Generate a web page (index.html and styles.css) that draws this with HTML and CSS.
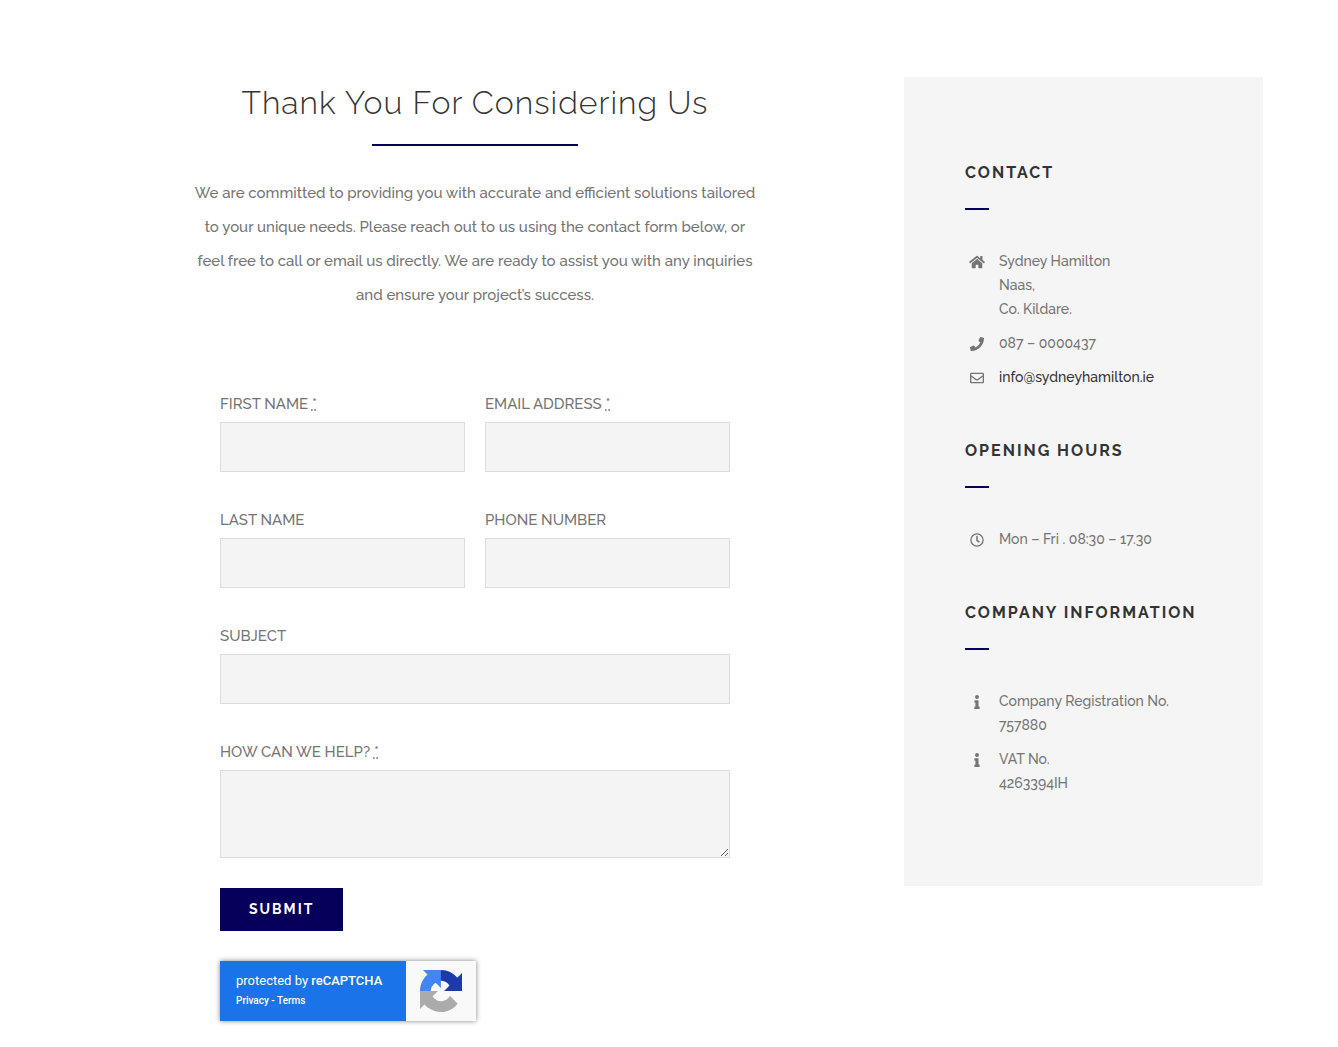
FILE: index.html
```
<!DOCTYPE html>
<html lang="en">
<head>
  <meta charset="utf-8">
  <meta name="viewport" content="width=device-width, initial-scale=1">
  <title>Contact</title>
  <link rel="stylesheet" href="styles.css">
</head>
<body>
  <div class="page">
    <main class="content">
      <h1 class="title">Thank You For Considering Us</h1>
      <p class="intro">We are committed to providing you with accurate and efficient solutions tailored to your unique needs. Please reach out to us using the contact form below, or feel free to call or email us directly. We are ready to assist you with any inquiries and ensure your project’s success.</p>

      <form class="contact-form">
        <div class="field">
          <label for="first-name">First Name <abbr title="required">*</abbr></label>
          <input type="text" id="first-name" required>
        </div>
        <div class="field">
          <label for="email">Email Address <abbr title="required">*</abbr></label>
          <input type="email" id="email" required>
        </div>
        <div class="field">
          <label for="last-name">Last Name</label>
          <input type="text" id="last-name">
        </div>
        <div class="field">
          <label for="phone">Phone Number</label>
          <input type="tel" id="phone">
        </div>
        <div class="field wide">
          <label for="subject">Subject</label>
          <input type="text" id="subject">
        </div>
        <div class="field wide">
          <label for="message">How can we help? <abbr title="required">*</abbr></label>
          <textarea id="message" required></textarea>
        </div>
        <div class="actions wide">
          <button type="submit" class="submit">Submit</button>
          <div class="captcha">
            <div class="captcha-text">
              <span class="captcha-title">protected by <strong>reCAPTCHA</strong></span>
              <span class="captcha-links"><a href="#">Privacy</a> - <a href="#">Terms</a></span>
            </div>
            <div class="captcha-logo">
              <svg width="42" height="42" viewBox="0 0 64 64">
                <path fill="#1c3aa9" d="M64 31.955l-.033-1.37V4.687l-7.16 7.16C50.948 4.674 42.033.093 32.05.093c-10.4 0-19.622 4.96-25.458 12.64l11.736 11.86a15.55 15.55 0 0 1 4.754-5.334c2.05-1.6 4.952-2.906 8.968-2.906.485 0 .86.057 1.135.163 4.976.393 9.288 3.14 11.828 7.124l-8.307 8.307L64 31.953"/>
                <path fill="#4285f4" d="M31.862.094l-1.37.033H4.594l7.16 7.16C4.58 13.147 0 22.06 0 32.046c0 10.4 4.96 19.622 12.64 25.458L24.5 45.768a15.55 15.55 0 0 1-5.334-4.754c-1.6-2.05-2.906-4.952-2.906-8.968 0-.485.057-.86.163-1.135.393-4.976 3.14-9.288 7.124-11.828l8.307 8.307L31.86.095"/>
                <path fill="#ababab" d="M.001 32.045l.033 1.37v25.898l7.16-7.16c5.86 7.173 14.774 11.754 24.76 11.754 10.4 0 19.622-4.96 25.458-12.64l-11.736-11.86a15.55 15.55 0 0 1-4.754 5.334c-2.05 1.6-4.952 2.906-8.968 2.906-.485 0-.86-.057-1.135-.163-4.976-.393-9.288-3.14-11.828-7.124l8.307-8.307c-10.522.04-22.4.066-27.295-.005"/>
              </svg>
            </div>
          </div>
        </div>
      </form>
    </main>

    <aside class="sidebar">
      <section class="block">
        <h2>Contact</h2>
        <ul>
          <li>
            <svg class="icon" viewBox="0 0 576 512"><path d="M280 148L96 300v164a16 16 0 0 0 16 16h112a16 16 0 0 0 16-16v-96a16 16 0 0 1 16-16h64a16 16 0 0 1 16 16v96a16 16 0 0 0 16 16h112a16 16 0 0 0 16-16V300L296 148a12 12 0 0 0-16 0zM572 251l-84-69V44a12 12 0 0 0-12-12h-56a12 12 0 0 0-12 12v72l-90-74a48 48 0 0 0-61 0L4 251a12 12 0 0 0-1 17l25 31a12 12 0 0 0 17 2L280 107a12 12 0 0 1 16 0l235 194a12 12 0 0 0 17-2l26-31a12 12 0 0 0-2-17z"/></svg>
            <span>Sydney Hamilton<br>Naas,<br>Co. Kildare.</span>
          </li>
          <li>
            <svg class="icon" viewBox="0 0 512 512"><path d="M493 25L389 1a24 24 0 0 0-27 14l-48 112a24 24 0 0 0 7 28l60 49A371 371 0 0 1 204 381l-49-60a24 24 0 0 0-28-7L15 362a24 24 0 0 0-14 27l24 104a24 24 0 0 0 23 19c256 0 464-207 464-464a24 24 0 0 0-19-23z"/></svg>
            <span>087 – 0000437</span>
          </li>
          <li>
            <svg class="icon" viewBox="0 0 512 512"><path d="M464 64H48C21 64 0 85 0 112v288c0 27 21 48 48 48h416c27 0 48-21 48-48V112c0-27-21-48-48-48zm0 48v41c-22 18-58 47-134 106-17 13-50 45-74 45s-57-32-74-45C106 200 70 171 48 153v-41h416zM48 400V214c23 19 55 45 104 83 22 17 60 55 104 55s82-38 104-55c49-38 81-64 104-83v186H48z"/></svg>
            <a href="mailto:info@sydneyhamilton.ie">info@sydneyhamilton.ie</a>
          </li>
        </ul>
      </section>

      <section class="block">
        <h2>Opening Hours</h2>
        <ul>
          <li>
            <svg class="icon" viewBox="0 0 512 512"><path d="M256 8a248 248 0 1 0 0 496 248 248 0 0 0 0-496zm0 448a200 200 0 1 1 0-400 200 200 0 0 1 0 400zm62-104l-85-62a12 12 0 0 1-5-10V116a12 12 0 0 1 12-12h32a12 12 0 0 1 12 12v142l67 48a12 12 0 0 1 2 17l-18 26a12 12 0 0 1-17 3z"/></svg>
            <span>Mon – Fri . 08:30 – 17.30</span>
          </li>
        </ul>
      </section>

      <section class="block">
        <h2>Company Information</h2>
        <ul>
          <li>
            <svg class="icon" viewBox="0 0 192 512"><path d="M20 424h20V280H20a20 20 0 0 1-20-20v-48a20 20 0 0 1 20-20h112a20 20 0 0 1 20 20v212h20a20 20 0 0 1 20 20v48a20 20 0 0 1-20 20H20a20 20 0 0 1-20-20v-48a20 20 0 0 1 20-20zM96 0a72 72 0 1 0 0 144A72 72 0 0 0 96 0z"/></svg>
            <span>Company Registration No.<br>757880</span>
          </li>
          <li>
            <svg class="icon" viewBox="0 0 192 512"><path d="M20 424h20V280H20a20 20 0 0 1-20-20v-48a20 20 0 0 1 20-20h112a20 20 0 0 1 20 20v212h20a20 20 0 0 1 20 20v48a20 20 0 0 1-20 20H20a20 20 0 0 1-20-20v-48a20 20 0 0 1 20-20zM96 0a72 72 0 1 0 0 144A72 72 0 0 0 96 0z"/></svg>
            <span>VAT No.<br>4263394IH</span>
          </li>
        </ul>
      </section>
    </aside>
  </div>
</body>
</html>
```
FILE: styles.css
```
* {
  box-sizing: border-box;
}

body {
  margin: 0;
  font-family: Raleway, Lato, sans-serif;
  font-size: 15px;
  font-weight: 500;
  color: #747474;
  background-color: #fff;
}

.page {
  display: grid;
  grid-template-columns: 1fr 359px;
  gap: 29px;
  align-items: start;
  padding: 77px 75px 24px;
}

.content {
  display: flex;
  flex-direction: column;
  align-items: center;
}

.title {
  margin: 0;
  font-size: 32px;
  font-weight: 300;
  line-height: 52px;
  letter-spacing: 1px;
  text-align: center;
  color: #333;
}

.title::after {
  content: "";
  display: block;
  width: 206px;
  height: 2px;
  margin: 15px auto 0;
  background-color: #06005a;
}

.intro {
  max-width: 570px;
  margin: 30px 0 80px;
  line-height: 34px;
  text-align: center;
}

.contact-form {
  display: grid;
  grid-template-columns: 1fr 1fr;
  gap: 36px 20px;
  width: 100%;
  max-width: 510px;
}

.wide {
  grid-column: 1 / -1;
}

label {
  display: block;
  line-height: 24px;
  padding-bottom: 6px;
  text-transform: uppercase;
}

input,
textarea {
  display: block;
  width: 100%;
  height: 50px;
  padding: 10px;
  border: 1px solid #dcdcdc;
  border-radius: 0;
  background-color: #f4f4f4;
  font: inherit;
  color: inherit;
}

textarea {
  height: 88px;
  resize: vertical;
}

.actions {
  margin-top: -6px;
}

.submit {
  display: block;
  height: 43px;
  padding: 0 29px 2px;
  border: none;
  background-color: #06005a;
  color: #fff;
  font-family: inherit;
  font-size: 14px;
  font-weight: 700;
  letter-spacing: 2px;
  text-transform: uppercase;
  cursor: pointer;
}

.captcha {
  display: flex;
  width: 256px;
  height: 60px;
  margin-top: 30px;
  box-shadow: 0 0 5px gray;
  font-family: Roboto, sans-serif;
  font-weight: 400;
}

.captcha-text {
  flex: 1;
  padding: 10px 16px;
  background-color: #1a73e8;
  color: #fff;
}

.captcha-title {
  display: block;
  font-size: 13px;
  line-height: 20px;
}

.captcha-title strong {
  font-weight: 500;
}

.captcha-links {
  display: block;
  font-size: 10px;
  font-weight: 500;
  line-height: 20px;
}

.captcha-links a {
  color: #fff;
  text-decoration: none;
}

.captcha-logo {
  display: flex;
  align-items: center;
  justify-content: center;
  width: 70px;
  background-color: #f9f9f9;
}

.sidebar {
  display: flex;
  flex-direction: column;
  gap: 50px;
  padding: 84px 61px 91px;
  background-color: #f5f5f5;
}

.block h2 {
  margin: 0 0 39px;
  font-size: 16px;
  font-weight: 700;
  line-height: 24px;
  letter-spacing: 2px;
  text-transform: uppercase;
  white-space: nowrap;
  color: #333;
}

.block h2::after {
  content: "";
  display: block;
  width: 24px;
  height: 2px;
  margin-top: 23px;
  background-color: #06005a;
}

.block ul {
  display: flex;
  flex-direction: column;
  gap: 10px;
  margin: 0;
  padding: 0;
  list-style: none;
}

.block li {
  display: flex;
  gap: 10px;
  font-size: 14px;
  line-height: 24px;
}

.block li a {
  color: #333;
  text-decoration: none;
}

.icon {
  flex: none;
  width: 24px;
  height: 14px;
  margin-top: 6px;
  fill: #747474;
}
```
